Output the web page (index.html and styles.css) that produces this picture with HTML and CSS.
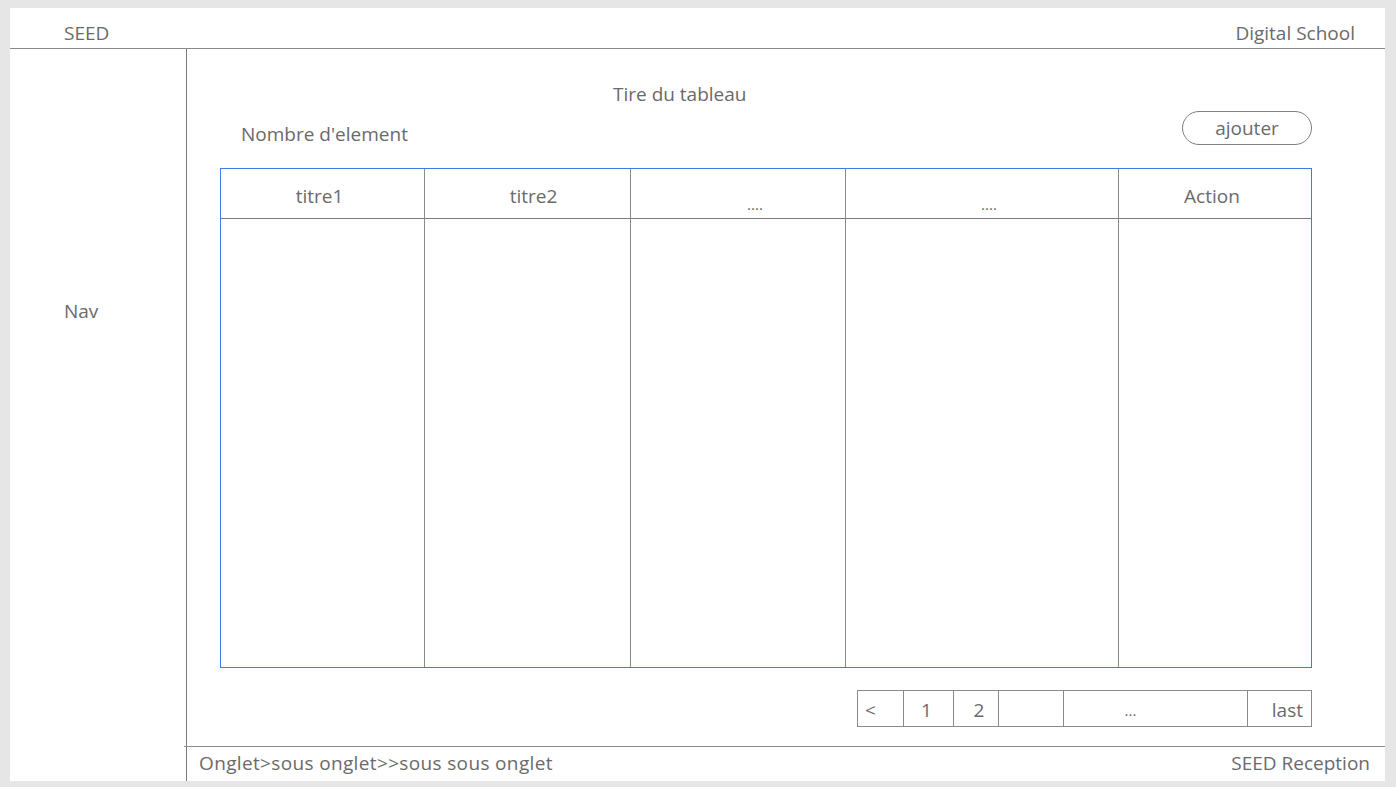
FILE: index.html
```html
<!DOCTYPE html>
<html lang="fr">
<head>
<meta charset="utf-8">
<title>Maquette tableau</title>
<link rel="stylesheet" href="styles.css">
</head>
<body>
<div class="slide">
  <header class="topbar">
    <span class="brand">SEED</span>
    <span class="school">Digital School</span>
  </header>
  <div class="body">
    <aside class="nav"><span class="nav-label">Nav</span></aside>
    <div class="right">
      <main class="content">
        <div class="title">Tire du tableau</div>
        <div class="toolbar">
          <span class="count">Nombre d'element</span>
          <button class="add">ajouter</button>
        </div>
        <div class="table">
          <div class="th">titre1</div>
          <div class="th">titre2</div>
          <div class="th low">....</div>
          <div class="th low">....</div>
          <div class="th">Action</div>
          <div class="td"></div>
          <div class="td"></div>
          <div class="td"></div>
          <div class="td"></div>
          <div class="td"></div>
        </div>
        <div class="pager-row">
          <div class="pager">
            <span class="pg pg-prev">&lt;</span>
            <span class="pg pg-1">1</span>
            <span class="pg pg-2">2</span>
            <span class="pg pg-empty"></span>
            <span class="pg pg-dots">...</span>
            <span class="pg pg-last">last</span>
          </div>
        </div>
      </main>
      <footer class="footer">
        <span class="crumbs">Onglet&gt;sous onglet&gt;&gt;sous sous onglet</span>
        <span class="app">SEED Reception</span>
      </footer>
    </div>
  </div>
</div>
</body>
</html>
```

FILE: styles.css
```css
* { box-sizing: border-box; }
html, body { margin: 0; padding: 0; }
body {
  background: #e6e6e6;
  font-family: "Open Sans", "Noto Sans", "Liberation Sans", sans-serif;
  color: #6a6a6a;
  font-size: 19px;
  width: 1396px;
  height: 787px;
  overflow: hidden;
}
.slide {
  margin: 8px 0 0 10px;
  width: 1375px;
  height: 773px;
  background: #fff;
  display: flex;
  flex-direction: column;
}
.topbar {
  height: 41px;
  border-bottom: 1px solid #8a8a8a;
  display: flex;
  justify-content: space-between;
  align-items: flex-end;
  padding: 0 30px 3px 54px;
  line-height: 24px;
}
.body {
  flex: 1;
  display: flex;
  min-height: 0;
}
.nav {
  width: 177px;
  border-right: 1px solid #7a7a7a;
  padding: 249px 0 0 54px;
}
.right {
  flex: 1;
  display: flex;
  flex-direction: column;
}
.content {
  flex: 1;
  padding: 33px 73px 0 33px;
  display: flex;
  flex-direction: column;
}
.title {
  padding-left: 393px;
  line-height: 24px;
}
.toolbar {
  margin-top: 5px;
  height: 38px;
  display: flex;
  justify-content: space-between;
  align-items: center;
  padding-left: 21px;
}
.count { padding-top: 7px; }
.add {
  width: 130px;
  height: 34px;
  border: 1px solid #808080;
  border-radius: 17px;
  background: #fff;
  font: inherit;
  color: inherit;
  padding: 0;
  margin-top: -5px;
}
.table {
  margin-top: 19px;
  height: 500px;
  border: 1px solid #3a7fe0;
  display: grid;
  grid-template-columns: 204px 206px 215px 273px 1fr;
  grid-template-rows: 50px 1fr;
}
.th, .td {
  border-right: 1px solid #8a8a8a;
}
.th {
  border-bottom: 1px solid #7a7a7a;
  display: flex;
  align-items: center;
  justify-content: center;
  padding-top: 4px;
}
.th:nth-child(1) { padding-right: 6px; }
.th:nth-child(2) { padding-left: 12px; }
.th:nth-child(5) { padding-right: 6px; }
.th.low { padding-top: 20px; padding-left: 14px; font-size: 15px; }
.th:nth-child(3) { padding-left: 34px; }
.th:nth-child(5), .td:nth-child(10) { border-right: none; }
.pager-row {
  margin-top: 22px;
  display: flex;
  justify-content: flex-end;
}
.pager {
  width: 455px;
  height: 37px;
  border: 1px solid #8a8a8a;
  display: flex;
}
.pg {
  border-right: 1px solid #8a8a8a;
  display: flex;
  align-items: center;
  justify-content: center;
  padding-top: 3px;
}
.pg-prev { width: 46px; justify-content: flex-start; padding-left: 7px; }
.pg-1 { width: 50px; padding-right: 4px; }
.pg-2 { width: 45px; padding-left: 6px; }
.pg-empty { width: 65px; }
.pg-dots { width: 184px; font-size: 15px; padding-right: 50px; }
.pg-last { flex: 1; border-right: none; justify-content: flex-end; padding-right: 8px; }
.footer {
  height: 35px;
  border-top: 1px solid #8a8a8a;
  margin-left: -3px;
  display: flex;
  justify-content: space-between;
  align-items: center;
  padding: 0 15px 3px 15px;
}
.crumbs { letter-spacing: 0.35px; }
```
